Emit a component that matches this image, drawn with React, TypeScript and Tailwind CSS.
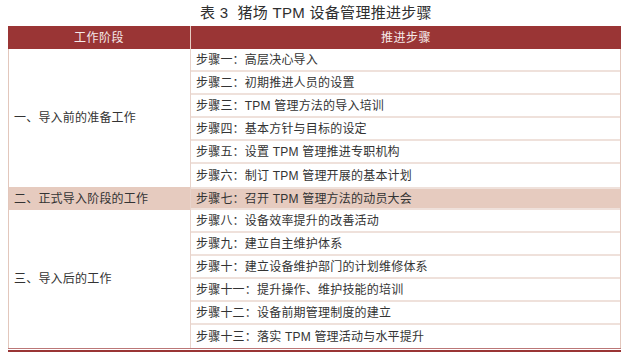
const GROUPS = [
  {
    stage: '一、导入前的准备工作',
    steps: [
      '步骤一：高层决心导入',
      '步骤二：初期推进人员的设置',
      '步骤三：TPM 管理方法的导入培训',
      '步骤四：基本方针与目标的设定',
      '步骤五：设置 TPM 管理推进专职机构',
      '步骤六：制订 TPM 管理开展的基本计划',
    ],
  },
  {
    stage: '二、正式导入阶段的工作',
    steps: ['步骤七：召开 TPM 管理方法的动员大会'],
    highlight: true,
  },
  {
    stage: '三、导入后的工作',
    steps: [
      '步骤八：设备效率提升的改善活动',
      '步骤九：建立自主维护体系',
      '步骤十：建立设备维护部门的计划维修体系',
      '步骤十一：提升操作、维护技能的培训',
      '步骤十二：设备前期管理制度的建立',
      '步骤十三：落实 TPM 管理活动与水平提升',
    ],
  },
];

export default function App() {
  return (
    <div className="w-[632px] h-[357px] bg-white text-[#333] font-['Liberation_Sans','Noto_Sans_CJK_SC',sans-serif] overflow-hidden">
      <div className="h-[26px] flex items-center justify-center text-[15px] text-[#2f2f2f] tracking-[0.3px]">
        表 3&nbsp; 猪场 TPM 设备管理推进步骤
      </div>

      <div className="ml-[8px] w-[613px]">
        <div className="flex h-[23px] bg-[#9a3535] text-[12px] text-[#f5e9e9] tracking-[0.5px]">
          <div className="w-[183px] flex items-center justify-center border-r border-[#e6cdc3]">工作阶段</div>
          <div className="flex-1 flex items-center justify-center">推进步骤</div>
        </div>

        <div className="border-l border-r border-[#e3c7bc]">
          {GROUPS.map(group => (
            <div key={group.stage} className={`flex text-[12px] tracking-[0.2px] ${group.highlight ? 'bg-[#e6cbbf]' : ''}`}>
              <div className="w-[182px] flex items-center pl-[5px] border-r border-[#e8d3cb]">{group.stage}</div>
              <div className="flex-1 flex flex-col">
                {group.steps.map((step, i) => (
                  <div
                    key={step}
                    className={`h-[23px] flex items-center pl-[5px] ${i < group.steps.length - 1 || group.highlight ? 'border-b-2 border-[#efe1db]' : ''} ${group.highlight ? 'border-t-2 border-[#efe1db]' : ''}`}
                  >
                    {step}
                  </div>
                ))}
              </div>
            </div>
          ))}
        </div>

        <div className="h-px bg-[#bb7777]" />
        <div className="mt-px h-[2px] bg-[#9a3535]" />
      </div>
    </div>
  );
}
